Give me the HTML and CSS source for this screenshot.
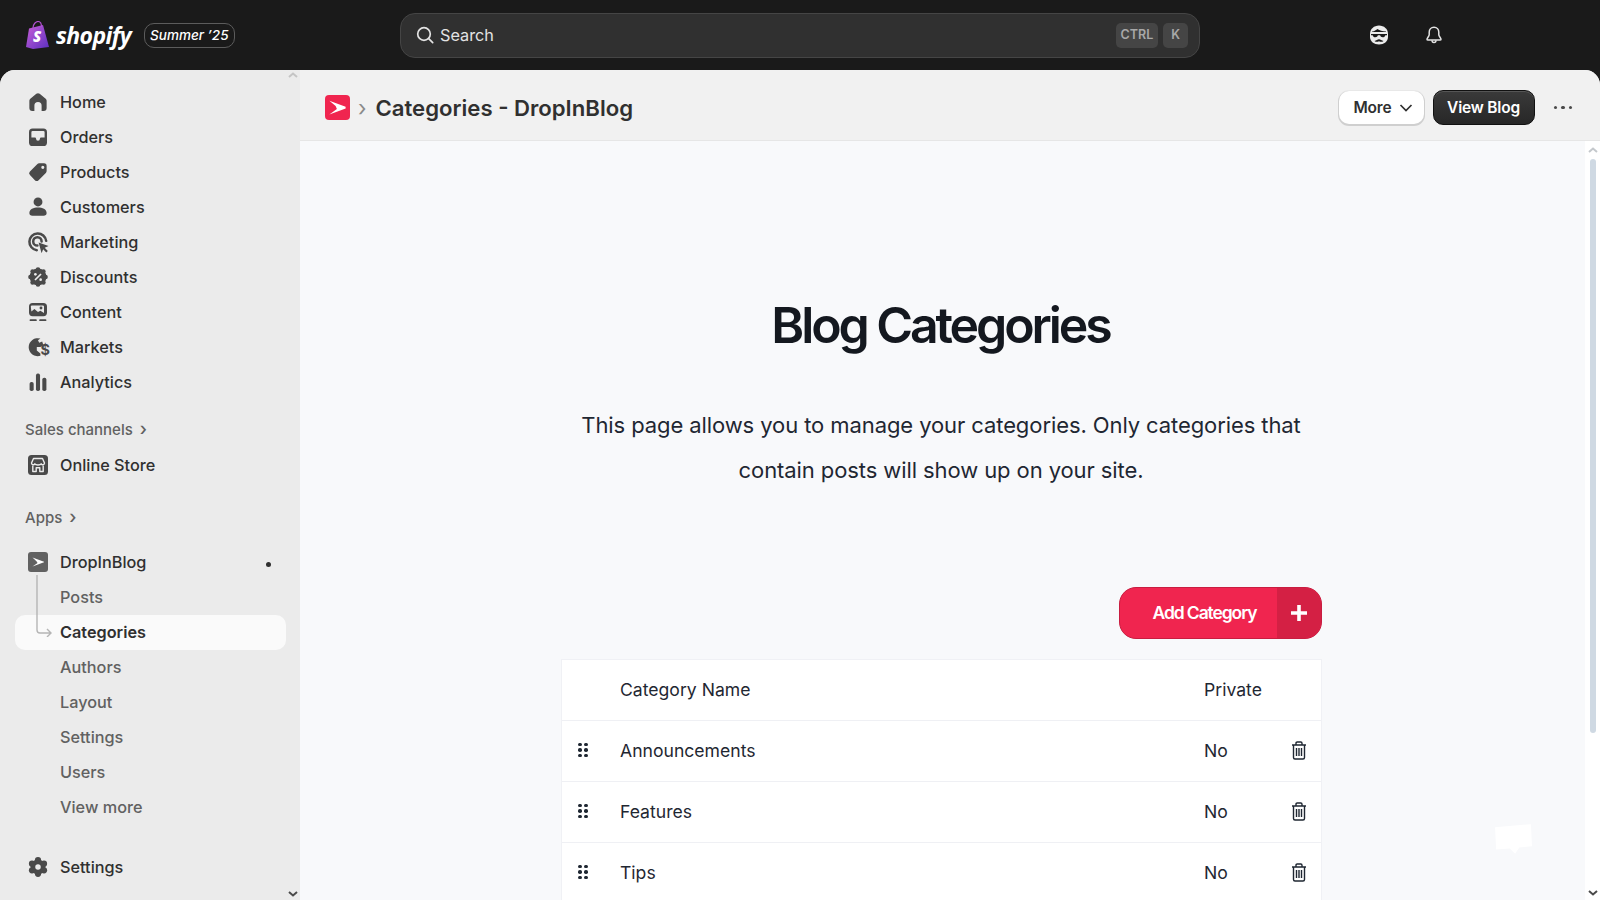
FILE: index.html
```html
<!DOCTYPE html>
<html lang="en">
<head>
    <meta charset="UTF-8">
    <title>Categories - DropInBlog</title>
    <link rel="stylesheet" href="styles.css">
</head>
<body>
    <header class="topbar">
        <div class="brand">
            <svg class="brand-bag" viewBox="0 0 24 28" width="24" height="28">
                <defs>
                    <linearGradient id="bag" x1="0" y1="0" x2="1" y2="1">
                        <stop offset="0" stop-color="#c95fd8"/>
                        <stop offset="1" stop-color="#5b2fc0"/>
                    </linearGradient>
                </defs>
                <path d="M3 7.500 17 4l6 22-16 2-7-2z" fill="url(#bag)"/>
                <path d="M7 7c0-4 3-6.500 5-6.500S15.500 2 15.500 6" fill="none" stroke="#b050d0" stroke-width="1.200"/>
                <text x="7" y="21" class="brand-s">S</text>
            </svg>
            <span class="brand-name">shopify</span>
            <span class="brand-tag">Summer ’25</span>
        </div>
        <div class="search">
            <svg viewBox="0 0 20 20" width="20" height="20" fill="none" stroke="#e3e3e3" stroke-width="1.700" stroke-linecap="round">
                <circle cx="9" cy="9" r="6.300"/>
                <path d="m13.700 13.700 4 4"/>
            </svg>
            <span class="search-text">Search</span>
            <kbd class="key">CTRL</kbd>
            <kbd class="key">K</kbd>
        </div>
        <div class="top-icons">
            <svg viewBox="0 0 20 20" width="20" height="20">
                <path d="M1 9c0-5 4-8.500 9-8.500S19 4 19 9v3c0 4.500-4 7.500-9 7.500S1 16.500 1 12z" fill="#ececec"/>
                <path d="M3 6.500c2 .3 4-1.700 5.500-2.500 2 1.800 5 2.300 8.500 2.500v.6H3z" fill="#1a1a1a"/>
                <path d="M2 9h16v1.200h-1.700c-.3 1.500-1.300 2-2.600 2-1.400 0-2.300-.7-2.600-2H8.900c-.3 1.300-1.200 2-2.600 2-1.300 0-2.300-.5-2.600-2H2z" fill="#1a1a1a"/>
                <path d="M5.500 16c2-.2 3-1.700 4.500-1.700s2.500 1.500 4.500 1.700c-1.500 1.200-3 .9-4.500.3-1.500.6-3 .9-4.500-.3z" fill="#1a1a1a"/>
            </svg>
            <svg viewBox="0 0 20 20" width="20" height="20" fill="none" stroke="#e3e3e3" stroke-width="1.500" stroke-linejoin="round">
                <path d="M10 2.300c-3 0-4.800 2.300-4.800 5v2.500c0 1.500-2.200 3.200-2.200 4.400 0 .5.400.8 1 .8h12c.6 0 1-.3 1-.8 0-1.200-2.200-2.900-2.200-4.400V7.300c0-2.700-1.800-5-4.800-5z"/>
                <path d="M8 15.200c0 3 4 3 4 0"/>
            </svg>
        </div>
    </header>

    <div class="frame">
        <aside class="sidebar">
            <svg class="scroll-arrow scroll-arrow-up" viewBox="0 0 10 6" width="10" height="6"><path d="m1 5 4-3.500L9 5" fill="none" stroke="#c4c4c4" stroke-width="2"/></svg>

            <nav class="nav">
                <a class="nav-item">
                    <svg class="nav-icon" viewBox="0 0 20 20"><path d="M8.600 3.200a2.200 2.200 0 0 1 2.800 0l5 4a2.200 2.200 0 0 1 .8 1.800v6a2.500 2.500 0 0 1-2.500 2.500H13V13a3 3 0 0 0-6 0v4.500H5.300A2.500 2.500 0 0 1 2.800 15V9a2.200 2.200 0 0 1 .8-1.800z"/></svg>
                    Home
                </a>
                <a class="nav-item">
                    <svg class="nav-icon" viewBox="0 0 20 20"><path fill-rule="evenodd" d="M5.500 3h9a3 3 0 0 1 3 3v8.500a3 3 0 0 1-3 3h-9a3 3 0 0 1-3-3V6a3 3 0 0 1 3-3zM5.500 5a1 1 0 0 0-1 1v4.500h2.800c.6 0 1 .4 1.100 1a1.600 1.600 0 0 0 3.200 0c.1-.6.500-1 1.100-1h2.800V6a1 1 0 0 0-1-1z"/></svg>
                    Orders
                </a>
                <a class="nav-item">
                    <svg class="nav-icon" viewBox="0 0 20 20"><path fill-rule="evenodd" d="M11 2.800h4A2.200 2.200 0 0 1 17.200 5v4a2.500 2.500 0 0 1-.7 1.800l-6 6a2.200 2.200 0 0 1-3.100 0l-4.100-4.200a2.200 2.200 0 0 1 0-3.100l6-6A2.500 2.500 0 0 1 11 2.800zM14 4.800a1.300 1.300 0 1 0 0 2.600 1.300 1.300 0 0 0 0-2.600z"/></svg>
                    Products
                </a>
                <a class="nav-item">
                    <svg class="nav-icon" viewBox="0 0 20 20"><circle cx="10" cy="5.800" r="3.700"/><path d="M2.800 15c0-3 3.500-4.500 7.200-4.500s7.200 1.500 7.200 4.500c0 1.500-1 2.300-2.500 2.300H5.300c-1.500 0-2.500-.8-2.500-2.300z"/></svg>
                    Customers
                </a>
                <a class="nav-item">
                    <svg class="nav-icon" viewBox="0 0 20 20"><path d="M16.800 9A7 7 0 1 0 9 16.800" fill="none" stroke="currentColor" stroke-width="2.100" stroke-linecap="round"/><path d="M13 9.500A3.500 3.500 0 1 0 9.500 13" fill="none" stroke="currentColor" stroke-width="2.100" stroke-linecap="round"/><path d="m10.500 10.500 8.300 2.800-3.200 1.500 2.600 2.600-1.300 1.300-2.600-2.600-1.300 3.200z"/></svg>
                    Marketing
                </a>
                <a class="nav-item">
                    <svg class="nav-icon" viewBox="0 0 20 20"><circle cx="10" cy="10" r="7"/><circle cx="10" cy="3.700" r="1.900"/><circle cx="10" cy="16.300" r="1.900"/><circle cx="3.700" cy="10" r="1.900"/><circle cx="16.300" cy="10" r="1.900"/><circle cx="5.500" cy="5.500" r="1.900"/><circle cx="14.500" cy="5.500" r="1.900"/><circle cx="5.500" cy="14.500" r="1.900"/><circle cx="14.500" cy="14.500" r="1.900"/><path class="icon-cut" d="m7.500 12.500 5-5" stroke-width="1.400"/><circle class="icon-hole" cx="7.800" cy="7.800" r="1.100"/><circle class="icon-hole" cx="12.200" cy="12.200" r="1.100"/></svg>
                    Discounts
                </a>
                <a class="nav-item">
                    <svg class="nav-icon" viewBox="0 0 20 20"><path fill-rule="evenodd" d="M5.500 2.500h9a3 3 0 0 1 3 3v5a3 3 0 0 1-3 3h-9a3 3 0 0 1-3-3v-5a3 3 0 0 1 3-3zM4.500 9.500l2.500-2 3 2.500 2-1 3 1.800V5.500a1 1 0 0 0-1-1h-9a1 1 0 0 0-1 1zM12.500 5.500a1.200 1.200 0 1 0 0 2.400 1.200 1.200 0 0 0 0-2.400z"/><rect x="3" y="16" width="6" height="1.500" rx=".7"/><rect x="11" y="16" width="6" height="1.500" rx=".7"/></svg>
                    Content
                </a>
                <a class="nav-item">
                    <svg class="nav-icon" viewBox="0 0 20 20"><path d="M12 3A7.500 7.500 0 1 0 12 17.300v-1.800L9 13v-3h3l2.500-1.500-1-3-2.500 1-1-2.200z"/><text x="12" y="17" class="icon-dollar">$</text></svg>
                    Markets
                </a>
                <a class="nav-item">
                    <svg class="nav-icon" viewBox="0 0 20 20"><rect x="3" y="10" width="3.400" height="7.500" rx="1.500"/><rect x="8.300" y="3" width="3.400" height="14.500" rx="1.500"/><rect x="13.600" y="6.500" width="3.400" height="11" rx="1.500"/></svg>
                    Analytics
                </a>
            </nav>

            <div class="nav-label nav-label-sales">Sales channels <span class="label-arrow">›</span></div>
            <a class="nav-item">
                <svg class="nav-icon nav-icon-box" viewBox="0 0 20 20"><rect width="20" height="20" rx="3.500"/><path d="M5.500 3.500h9L16.500 8c0 2-2.500 2.300-3.300.8-.8 1.500-5.600 1.500-6.400 0C6 10.300 3.500 10 3.500 8zM4.800 10.800v5.700h3.400v-3.800h3.600v3.800h3.400v-5.700" fill="none" stroke="#ebebeb" stroke-width="1.400" stroke-linejoin="round"/></svg>
                Online Store
            </a>

            <div class="nav-label nav-label-apps">Apps <span class="label-arrow">›</span></div>
            <a class="nav-item nav-item-app">
                <svg class="nav-icon nav-icon-box" viewBox="0 0 20 20"><rect width="20" height="20" rx="3" fill="#616161"/><path d="m4.500 5.500 11.500 4.200v.6L4.500 14.500l5-3.400-.8-1.600z" fill="#fff"/></svg>
                DropInBlog
                <span class="pin-dot"></span>
            </a>
            <div class="subnav">
                <svg class="tree-line" viewBox="0 0 18 62" width="18" height="62"><path d="M1 0v55c0 2 1 3 3 3h11m-4-4 4 4-4 4" fill="none" stroke="#b5b5b5" stroke-width="1.400"/></svg>
                <a class="nav-item sub-item">Posts</a>
                <a class="nav-item sub-item sub-item-active">Categories</a>
                <a class="nav-item sub-item">Authors</a>
                <a class="nav-item sub-item">Layout</a>
                <a class="nav-item sub-item">Settings</a>
                <a class="nav-item sub-item">Users</a>
                <a class="nav-item sub-item">View more</a>
            </div>

            <a class="nav-item nav-item-settings">
                <svg class="nav-icon" viewBox="0 0 20 20"><circle cx="10" cy="10" r="6.200"/><circle cx="10" cy="4.300" r="2.600"/><circle cx="10" cy="15.700" r="2.600"/><circle cx="5" cy="7.200" r="2.600"/><circle cx="15" cy="7.200" r="2.600"/><circle cx="5" cy="12.800" r="2.600"/><circle cx="15" cy="12.800" r="2.600"/><circle class="icon-hole" cx="10" cy="10" r="2.300"/></svg>
                Settings
            </a>

            <svg class="scroll-arrow scroll-arrow-down" viewBox="0 0 10 6" width="10" height="6"><path d="m1 1 4 3.500L9 1" fill="none" stroke="#4a4a4a" stroke-width="2"/></svg>
        </aside>

        <main class="main">
            <div class="page-head">
                <span class="app-badge">
                    <svg viewBox="0 0 20 20" width="25" height="25"><path d="m3.500 4.500 13 4.800v1.400L3.500 15.500l6-4.400-1-2.400z" fill="#fff"/></svg>
                </span>
                <span class="crumb-arrow">›</span>
                <h2 class="page-title">Categories - DropInBlog</h2>
                <button class="btn-more">More
                    <svg viewBox="0 0 14 8" width="14" height="8"><path d="m1.500 1 5.500 5.500L12.500 1" fill="none" stroke="#303030" stroke-width="1.700"/></svg>
                </button>
                <button class="btn-view">View Blog</button>
                <span class="head-dots"><i></i><i></i><i></i></span>
            </div>

            <div class="body-wrap">
                <div class="content">
                    <h1 class="heading">Blog Categories</h1>
                    <p class="intro">This page allows you to manage your categories. Only categories that contain posts will show up on your site.</p>

                    <div class="panel">
                        <div class="panel-actions">
                            <button class="btn-add">
                                <span class="btn-add-label">Add Category</span>
                                <span class="btn-add-plus">
                                    <svg viewBox="0 0 16 16" width="16" height="16"><path d="M6.200 0h3.600v6.200H16v3.600H9.800V16H6.200V9.800H0V6.200h6.200z" fill="#fff"/></svg>
                                </span>
                            </button>
                        </div>

                        <div class="table">
                            <div class="row">
                                <span></span>
                                <span>Category Name</span>
                                <span>Private</span>
                                <span></span>
                            </div>
                            <div class="row">
                                <span class="drag"><i></i><i></i><i></i><i></i><i></i><i></i></span>
                                <span>Announcements</span>
                                <span>No</span>
                                <svg class="trash" viewBox="0 0 16 19" width="16" height="19"><path d="M1 4h14M2.500 4v12.500c0 1 .5 1.500 1.500 1.500h8c1 0 1.500-.5 1.500-1.500V4M5 4V2.200C5 1.500 5.500 1 6.200 1h3.600c.7 0 1.200.5 1.200 1.200V4M5.500 7v8M8 7v8M10.500 7v8"/></svg>
                            </div>
                            <div class="row">
                                <span class="drag"><i></i><i></i><i></i><i></i><i></i><i></i></span>
                                <span>Features</span>
                                <span>No</span>
                                <svg class="trash" viewBox="0 0 16 19" width="16" height="19"><path d="M1 4h14M2.500 4v12.500c0 1 .5 1.500 1.500 1.500h8c1 0 1.500-.5 1.500-1.500V4M5 4V2.200C5 1.500 5.500 1 6.200 1h3.600c.7 0 1.200.5 1.200 1.200V4M5.500 7v8M8 7v8M10.500 7v8"/></svg>
                            </div>
                            <div class="row">
                                <span class="drag"><i></i><i></i><i></i><i></i><i></i><i></i></span>
                                <span>Tips</span>
                                <span>No</span>
                                <svg class="trash" viewBox="0 0 16 19" width="16" height="19"><path d="M1 4h14M2.500 4v12.500c0 1 .5 1.500 1.500 1.500h8c1 0 1.500-.5 1.500-1.500V4M5 4V2.200C5 1.500 5.500 1 6.200 1h3.600c.7 0 1.200.5 1.200 1.200V4M5.500 7v8M8 7v8M10.500 7v8"/></svg>
                            </div>
                        </div>
                    </div>

                    <svg class="chat-bubble" viewBox="0 0 36 30" width="38" height="32"><path d="M1 3 35 0l1 21-12 1-4 6-5-5-13 1z" fill="#fff"/></svg>
                </div>

                <div class="scrollbar">
                    <svg viewBox="0 0 10 6" width="10" height="6"><path d="m1 5 4-3.500L9 5" fill="none" stroke="#c4c8cc" stroke-width="2"/></svg>
                    <div class="scroll-thumb"></div>
                    <svg class="scroll-end" viewBox="0 0 10 6" width="10" height="6"><path d="m1 1 4 3.500L9 1" fill="none" stroke="#4a4a4a" stroke-width="2"/></svg>
                </div>
            </div>
        </main>
    </div>
</body>
</html>
```

FILE: styles.css
```css
* {
    box-sizing: border-box;
}
html, body {
    height: 100%;
}
body {
    margin: 0;
    background-color: #1a1a1a;
    color: #303030;
    font-family: Inter, "Liberation Sans", sans-serif;
    font-size: 16.25px;
    overflow: hidden;
}

/* top bar */
.topbar {
    display: flex;
    align-items: center;
    height: 70px;
    padding-left: 26px;
}
.brand {
    display: flex;
    align-items: center;
    width: 374px;
}
.brand-bag {
    flex: none;
}
.brand-s {
    font-family: "Open Sans", sans-serif;
    font-weight: 800;
    font-style: italic;
    font-size: 15px;
    fill: #fff;
}
.brand-name {
    margin-left: 6px;
    font-family: "Open Sans", sans-serif;
    font-weight: 700;
    font-style: italic;
    font-size: 23px;
    letter-spacing: -0.6px;
    color: #fff;
}
.brand-tag {
    margin-left: 13px;
    padding: 0 5px;
    height: 25px;
    line-height: 23px;
    border: 1px solid #5c5c5c;
    border-radius: 10px;
    font-size: 13.500px;
    font-style: italic;
    font-weight: 500;
    color: #fff;
}
.search {
    display: flex;
    align-items: center;
    width: 800px;
    height: 45px;
    padding: 0 11px 0 14px;
    background-color: #303030;
    border: 1px solid #454545;
    border-radius: 15px;
    gap: 5px;
}
.search-text {
    flex: 1;
    color: #e3e3e3;
    font-size: 16.25px;
}
.key {
    height: 25px;
    padding: 0 5px;
    line-height: 23px;
    background-color: #454545;
    border-radius: 5px;
    font-family: Inter, sans-serif;
    font-size: 12.500px;
    font-weight: 600;
    color: #a8a8a8;
}
.key:last-child {
    padding: 0 8px;
}
.top-icons {
    display: flex;
    gap: 35px;
    margin-left: 169px;
}

/* frame under the top bar */
.frame {
    display: flex;
    height: 830px;
    border-radius: 15px 15px 0 0;
    overflow: hidden;
    background-color: #f1f1f1;
}

/* sidebar */
.sidebar {
    position: relative;
    flex: none;
    width: 300px;
    padding: 14px 14px 0 15px;
    background-color: #ebebeb;
}
.nav-item {
    display: flex;
    align-items: center;
    height: 35px;
    padding-left: 11px;
    border-radius: 10px;
    font-weight: 500;
    color: #303030;
    white-space: nowrap;
}
.nav ~ .nav-item {
    padding-bottom: 2px;
}
.nav-icon {
    flex: none;
    width: 24px;
    height: 24px;
    margin-right: 10px;
    fill: #4a4a4a;
    color: #4a4a4a;
}
.nav-icon-box {
    width: 20px;
    height: 20px;
    margin-left: 2px;
    margin-right: 12px;
}
.icon-cut {
    fill: none;
    stroke: #ebebeb;
}
.icon-hole {
    fill: #ebebeb;
}
.icon-dollar {
    font-family: Inter, sans-serif;
    font-size: 12px;
    font-weight: 700;
    fill: #4a4a4a;
}
.nav-label {
    padding-left: 10px;
    height: 22px;
    line-height: 22px;
    font-size: 15px;
    font-weight: 500;
    color: #616161;
}
.nav-label-sales {
    margin-top: 20px;
    margin-bottom: 7px;
}
.nav-label-apps {
    margin-top: 24px;
    margin-bottom: 16px;
}
.label-arrow {
    margin-left: 3px;
    font-size: 18px;
    line-height: 18px;
}
.pin-dot {
    width: 5px;
    height: 5px;
    margin-left: auto;
    margin-right: 15px;
    margin-top: 6px;
    border-radius: 50%;
    background-color: #303030;
}
.subnav {
    position: relative;
}
.tree-line {
    position: absolute;
    left: 21px;
    top: -5px;
    z-index: 1;
}
.sub-item {
    padding-left: 45px;
    padding-bottom: 2px;
    color: #616161;
}
.sub-item-active {
    background-color: #fafafa;
    color: #303030;
    font-weight: 600;
}
.nav-item-settings {
    margin-top: 25px;
}
.scroll-arrow {
    position: absolute;
    left: 288px;
}
.scroll-arrow-up {
    top: 2px;
}
.scroll-arrow-down {
    bottom: 3px;
}

/* main column */
.main {
    display: flex;
    flex-direction: column;
    flex: 1;
    min-width: 0;
}
.page-head {
    display: flex;
    align-items: center;
    flex: none;
    height: 71px;
    padding: 5px 28px 0 25px;
    background-color: #f1f1f1;
    border-bottom: 1px solid #e6e6e6;
}
.app-badge {
    display: flex;
    align-items: center;
    justify-content: center;
    width: 25px;
    height: 25px;
    background-color: #f0254f;
    border-radius: 4px;
}
.crumb-arrow {
    margin: 0 9px 0 8px;
    font-size: 22px;
    line-height: 22px;
    color: #8a8a8a;
}
.page-title {
    flex: 1;
    margin: 0;
    font-size: 22.150px;
    font-weight: 600;
    color: #303030;
}
.btn-more {
    display: flex;
    align-items: center;
    gap: 8px;
    width: 85px;
    height: 33px;
    padding: 0 0 0 15px;
    background-color: #fff;
    border: none;
    border-radius: 10px;
    box-shadow: 0 1px 0 1px #cfcfcf, 0 0 0 1px #e8e8e8;
    font-family: Inter, sans-serif;
    font-size: 15.500px;
    font-weight: 600;
    letter-spacing: -0.2px;
    color: #303030;
}
.btn-view {
    width: 102px;
    height: 35px;
    margin-left: 9px;
    padding: 0;
    background: linear-gradient(#3a3a3a, #272727);
    border: 1px solid #111;
    border-radius: 10px;
    box-shadow: inset 0 1px 0 #555;
    font-family: Inter, sans-serif;
    font-size: 15.500px;
    font-weight: 600;
    letter-spacing: -0.2px;
    color: #fff;
}
.head-dots {
    display: flex;
    gap: 4px;
    margin-left: 19px;
}
.head-dots i {
    width: 3.500px;
    height: 3.500px;
    border-radius: 50%;
    background-color: #4a4a4a;
}

/* page body */
.body-wrap {
    display: flex;
    flex: 1;
    min-height: 0;
}
.content {
    position: relative;
    flex: 1;
    min-width: 0;
    overflow: hidden;
    background-color: #f8f9fb;
    text-align: center;
}
.heading {
    margin: 149px 0 0;
    padding-right: 4px;
    font-size: 50px;
    line-height: 70px;
    font-weight: 600;
    letter-spacing: -3.100px;
    color: #14181f;
}
.intro {
    width: 760px;
    margin: 43px 0 0 261px;
    font-size: 22px;
    line-height: 45px;
    letter-spacing: -0.09px;
    color: #1f2732;
}
.panel {
    width: 761px;
    margin: 94px 0 0 261px;
    text-align: left;
}
.panel-actions {
    display: flex;
    justify-content: flex-end;
    margin-bottom: 20px;
}
.btn-add {
    display: flex;
    width: 203px;
    height: 52px;
    padding: 0;
    overflow: hidden;
    background-color: #f0254f;
    border: 1px solid #c81d40;
    border-radius: 17px;
    font-family: Inter, sans-serif;
    color: #fff;
}
.btn-add-label {
    flex: 1;
    align-self: center;
    padding-left: 12px;
    padding-bottom: 2px;
    text-align: center;
    font-size: 17.500px;
    font-weight: 600;
    letter-spacing: -1.100px;
}
.btn-add-plus {
    display: flex;
    align-items: center;
    justify-content: center;
    width: 44px;
    padding-bottom: 1px;
    padding-right: 1px;
    background-color: #d42044;
}
.table {
    background-color: #fff;
    border: 1px solid #f0f1f5;
    font-size: 17.600px;
    color: #1f2732;
}
.row {
    display: grid;
    grid-template-columns: 58px 1fr 73px 44px;
    align-items: center;
    height: 61px;
    padding-bottom: 2px;
    border-bottom: 1px solid #eff0f4;
}
.drag {
    display: grid;
    grid-template-columns: 3px 3px;
    gap: 2px 3px;
    justify-content: start;
    width: 9px;
    margin-left: 16px;
}
.drag i {
    width: 3.500px;
    height: 3.500px;
    border-radius: 50%;
    background-color: #1f2732;
}
.trash {
    fill: none;
    stroke: #1f2732;
    stroke-width: 1.400;
    justify-self: center;
}
.chat-bubble {
    position: absolute;
    left: 1194px;
    top: 683px;
}

/* page scrollbar */
.scrollbar {
    display: flex;
    flex-direction: column;
    align-items: center;
    flex: none;
    width: 15px;
    padding: 6px 0 4px;
    background-color: #fff;
}
.scroll-thumb {
    width: 6px;
    height: 574px;
    margin-top: 6px;
    background-color: #cfd9e3;
    border-radius: 3px;
}
.scroll-end {
    margin-top: auto;
}
```
